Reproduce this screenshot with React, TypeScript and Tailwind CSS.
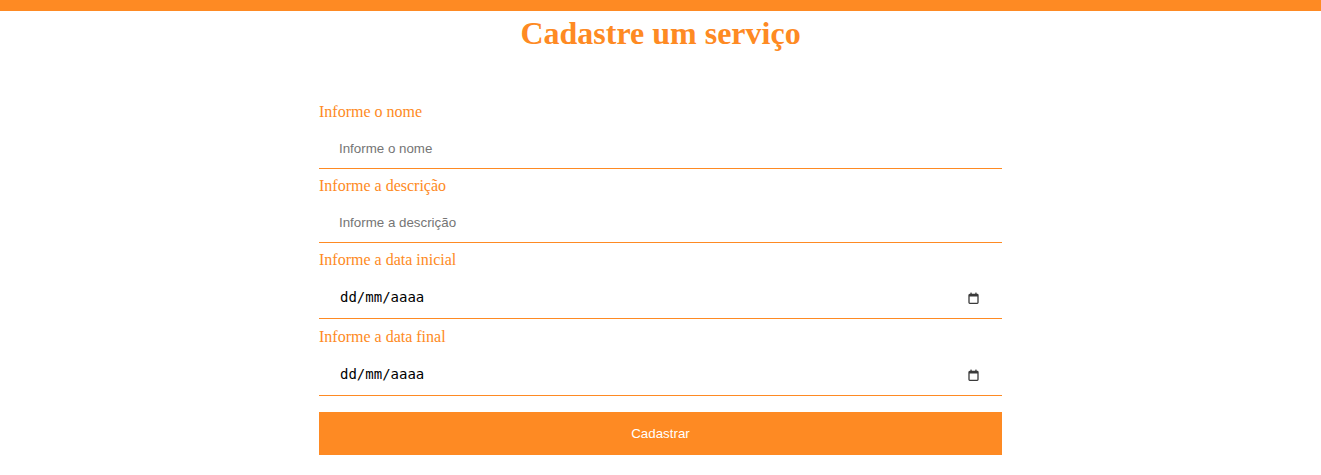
import React from 'react';

const CalendarIcon = () => (
  <svg width="11" height="12" viewBox="0 0 11 12" className="text-[#3a3a3a]">
    <rect x="1" y="2.5" width="9" height="8.8" rx="0.8" fill="none" stroke="currentColor" strokeWidth="1.3" />
    <rect x="1" y="2.5" width="9" height="2" fill="currentColor" />
    <rect x="2.4" y="0.6" width="1.3" height="2.4" fill="currentColor" />
    <rect x="7.3" y="0.6" width="1.3" height="2.4" fill="currentColor" />
  </svg>
);

type FieldProps = { label: string; placeholder?: string; date?: boolean };

const Field: React.FC<FieldProps> = ({ label, placeholder, date }) => (
  <div className="flex flex-col">
    <label className="h-[19px] leading-[19px] text-[16px] text-[#fe8a23] font-['Liberation_Serif',serif]">
      {label}
    </label>
    {date ? (
      <div className="mt-2 mb-2 h-[42px] border-b border-[#fe8a23] flex items-center justify-between pl-[21px] pr-[23px]">
        <span className="text-[14px] text-black font-['DejaVu_Sans_Mono',monospace]">dd/mm/aaaa</span>
        <CalendarIcon />
      </div>
    ) : (
      <input
        placeholder={placeholder}
        className="mt-2 mb-[7px] h-10 border-b border-[#fe8a23] px-5 text-[13.33px] outline-none placeholder:text-[#757575] font-['Liberation_Sans',Arial,sans-serif]"
      />
    )}
  </div>
);

export default function App() {
  return (
    <div className="min-h-[475px] bg-white">
      <div className="h-[11px] bg-[#fe8a23]" />
      <h1 className="mt-1 text-center text-[32px] leading-[36px] font-bold text-[#fe8a23] font-['Liberation_Serif',serif]">
        Cadastre um serviço
      </h1>
      <form className="w-[683px] mx-auto mt-[51px] flex flex-col">
        <Field label="Informe o nome" placeholder="Informe o nome" />
        <Field label="Informe a descrição" placeholder="Informe a descrição" />
        <Field label="Informe a data inicial" date />
        <Field label="Informe a data final" date />
        <button
          type="button"
          className="mt-2 h-[43px] bg-[#fe8a23] text-white text-[13.33px] font-['Liberation_Sans',Arial,sans-serif]"
        >
          Cadastrar
        </button>
      </form>
    </div>
  );
}
